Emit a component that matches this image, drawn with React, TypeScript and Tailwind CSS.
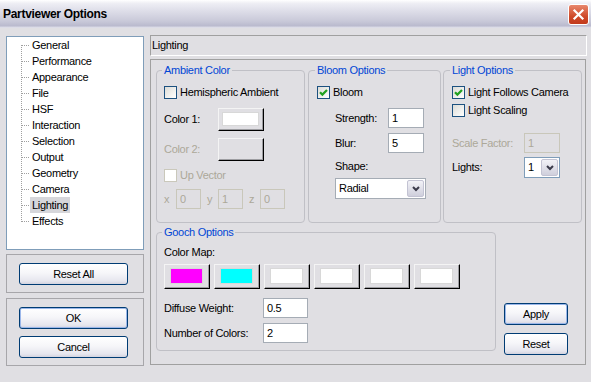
import React from "react";

const GRAY = "text-[#aca899]";

function Checkbox({ checked = false, disabled = false }: { checked?: boolean; disabled?: boolean }) {
  if (disabled) {
    return <span className="block w-[13px] h-[13px] shrink-0 border border-[#cac8bb] bg-white" />;
  }
  return (
    <span className="flex w-[13px] h-[13px] shrink-0 items-center justify-center border border-[#1c5180] bg-[linear-gradient(135deg,#dcdcd7,#ffffff)]">
      {checked && (
        <svg width="11" height="11" viewBox="0 0 11 11">
          <path d="M2 5.2 L4.4 7.6 L9 3" stroke="#21a121" strokeWidth="2.2" fill="none" />
        </svg>
      )}
    </span>
  );
}

function TextBox({ value, w, disabled = false, h = "h-[20px]" }: { value: string; w: string; disabled?: boolean; h?: string }) {
  return (
    <div
      className={`${w} ${h} flex items-center pl-[3px] border ${
        disabled ? "border-[#c9c7ba] text-[#aca899]" : "border-[#a5acb5] bg-white"
      }`}
    >
      {value}
    </div>
  );
}

function Chevron() {
  return (
    <svg width="8" height="6" viewBox="0 0 8 6">
      <polyline points="1,1 4,4 7,1" stroke="#3a3a4a" strokeWidth="2" fill="none" />
    </svg>
  );
}

function Select({ value, w, border }: { value: string; w: string; border: string }) {
  return (
    <div className={`${w} h-[21px] flex items-stretch border ${border} bg-white p-[1px]`}>
      <div className="flex-1 flex items-center pl-[2px]">{value}</div>
      <div className="w-[17px] flex items-center justify-center rounded-[2px] border border-[#c3c3d3] bg-[linear-gradient(to_bottom,#f2f2f7,#cfcfdc)]">
        <Chevron />
      </div>
    </div>
  );
}

function ColorButton({ swatch, w = "w-[46px]", h = "h-[25px]", pad = "p-[3px]" }: { swatch?: string; w?: string; h?: string; pad?: string }) {
  return (
    <div className={`${w} ${h} shrink-0 border-t border-l border-t-[#f4f4f4] border-l-[#f4f4f4] border-r border-b border-r-[#000000] border-b-[#000000]`}>
      <div className={`w-full h-full border-r border-b border-r-[#9d9da1] border-b-[#9d9da1] bg-[#e0dfe3] ${pad}`}>
        {swatch && <div className={`w-full h-full border border-[#d8d8d8] ${swatch}`} />}
      </div>
    </div>
  );
}

function XpButton({ label, w, def = false }: { label: string; w: string; def?: boolean }) {
  return (
    <div
      className={`${w} h-[22px] flex items-center justify-center rounded-[3px] border border-[#003c74] bg-[linear-gradient(to_bottom,#ffffff_0%,#f6f6f9_45%,#e6e6ee_85%,#d3d3df_100%)] ${
        def ? "shadow-[inset_0_0_0_1px_#9bb7ea]" : ""
      }`}
    >
      {label}
    </div>
  );
}

const treeItems = [
  "General",
  "Performance",
  "Appearance",
  "File",
  "HSF",
  "Interaction",
  "Selection",
  "Output",
  "Geometry",
  "Camera",
  "Lighting",
  "Effects",
];

function Tree() {
  return (
    <div className="h-[214px] border border-[#7f9db9] bg-white">
      {treeItems.map((it, i) => (
        <div key={it} className="h-[16px] flex items-center pl-[13px]">
          <svg width="10" height="16" viewBox="0 0 10 16" shapeRendering="crispEdges" className="shrink-0">
            <line
              x1="1.5"
              y1={i === 0 ? 8 : 0}
              x2="1.5"
              y2={i === treeItems.length - 1 ? 9 : 16}
              stroke="#a0a0a0"
              strokeDasharray="1 1"
            />
            <line x1="2" y1="8.5" x2="10" y2="8.5" stroke="#a0a0a0" strokeDasharray="1 1" />
          </svg>
          <span className={`h-[16px] flex items-center px-[2px] ${it === "Lighting" ? "bg-[#d6d6da]" : ""}`}>{it}</span>
        </div>
      ))}
    </div>
  );
}

function Legend({ children }: { children: React.ReactNode }) {
  return <legend className="ml-[-2px] px-[2px] text-[#0046d5] leading-[13px]">{children}</legend>;
}

export default function App() {
  return (
    <div className="w-[591px] h-[382px] overflow-hidden bg-[#e0dfe3] font-['Liberation_Sans',Arial,sans-serif] text-[11px] leading-[13px] tracking-[-0.3px] text-black flex flex-col">
      {/* Title bar */}
      <div className="h-[28px] shrink-0 flex items-center justify-between pl-[3px] pr-[2px] bg-[linear-gradient(to_bottom,#ffffff_0%,#eeeef4_12%,#dddde8_40%,#c9c9d9_75%,#babace_92%,#e6e6ee_100%)]">
        <span className="font-bold text-[12px] tracking-[-0.3px]">Partviewer Options</span>
        <div className="w-[21px] h-[21px] flex items-center justify-center rounded-[3px] border border-white bg-[linear-gradient(to_bottom,#e8876c,#cf4a2a_60%,#c23a1c)]">
          <svg width="13" height="13" viewBox="0 0 13 13">
            <path d="M2.5 2.5 L10.5 10.5 M10.5 2.5 L2.5 10.5" stroke="#ffffff" strokeWidth="2.2" strokeLinecap="square" />
          </svg>
        </div>
      </div>

      <div className="flex">
        {/* Left column */}
        <div className="ml-[6px] mt-[8px] w-[138px] flex flex-col">
          <Tree />
          <div className="mt-[4px] h-[39px] border border-[#a7a6aa] pl-[12px] pt-[8px]">
            <XpButton label="Reset All" w="w-[109px]" />
          </div>
          <div className="mt-[5px] h-[68px] border border-[#a7a6aa] pl-[12px] pt-[8px] flex flex-col gap-[7px]">
            <XpButton label="OK" w="w-[109px]" def />
            <XpButton label="Cancel" w="w-[109px]" />
          </div>
        </div>

        {/* Right column */}
        <div className="ml-[6px] mt-[7px] w-[437px] flex flex-col">
          <div className="h-[21px] flex items-center pl-[1px] border-t border-l border-t-[#a0a0a0] border-l-[#a0a0a0] border-b border-r border-b-white border-r-white">
            Lighting
          </div>
          <div className="mt-[3px] w-[436px] h-[306px] border border-[#a0a0a0] pl-[5px] pt-[4px]">
            <div className="flex">
              {/* Ambient */}
              <fieldset className="w-[149px] h-[159px] border border-[#c0c0c6] rounded-[4px] pl-[7px]">
                <Legend>Ambient Color</Legend>
                <div className="mt-[9px] h-[13px] flex items-center">
                  <Checkbox />
                  <span className="ml-[3px]">Hemispheric Ambient</span>
                </div>
                <div className="mt-[9px] h-[23px] flex items-center">
                  <span className="w-[54px]">Color 1:</span>
                  <ColorButton swatch="bg-white" h="h-[23px]" />
                </div>
                <div className="mt-[7px] h-[23px] flex items-center">
                  <span className={`w-[54px] ${GRAY}`}>Color 2:</span>
                  <ColorButton h="h-[23px]" />
                </div>
                <div className="mt-[8px] h-[13px] flex items-center">
                  <Checkbox disabled />
                  <span className={`ml-[3px] ${GRAY}`}>Up Vector</span>
                </div>
                <div className={`mt-[7px] h-[20px] flex items-center ${GRAY}`}>
                  <span className="w-[12px]">x</span>
                  <TextBox value="0" w="w-[25px]" disabled />
                  <span className="ml-[6px] w-[11px]">y</span>
                  <TextBox value="1" w="w-[25px]" disabled />
                  <span className="ml-[6px] w-[11px]">z</span>
                  <TextBox value="0" w="w-[25px]" disabled />
                </div>
              </fieldset>

              {/* Bloom */}
              <fieldset className="ml-[3px] w-[133px] h-[159px] border border-[#c0c0c6] rounded-[4px] pl-[8px]">
                <Legend>Bloom Options</Legend>
                <div className="mt-[9px] h-[13px] flex items-center">
                  <Checkbox checked />
                  <span className="ml-[3px]">Bloom</span>
                </div>
                <div className="mt-[9px] h-[20px] flex items-center pl-[18px]">
                  <span className="w-[53px]">Strength:</span>
                  <TextBox value="1" w="w-[36px]" />
                </div>
                <div className="mt-[5px] h-[20px] flex items-center pl-[18px]">
                  <span className="w-[53px]">Blur:</span>
                  <TextBox value="5" w="w-[36px]" />
                </div>
                <div className="mt-[7px] h-[13px] flex items-center pl-[18px]">Shape:</div>
                <div className="mt-[5px] pl-[18px]">
                  <Select value="Radial" w="w-[91px]" border="border-[#a5acb5]" />
                </div>
              </fieldset>

              {/* Light */}
              <fieldset className="ml-[2px] w-[139px] h-[159px] border border-[#c0c0c6] rounded-[4px] pl-[8px]">
                <Legend>Light Options</Legend>
                <div className="mt-[9px] h-[13px] flex items-center">
                  <Checkbox checked />
                  <span className="ml-[3px]">Light Follows Camera</span>
                </div>
                <div className="mt-[5px] h-[13px] flex items-center">
                  <Checkbox />
                  <span className="ml-[3px]">Light Scaling</span>
                </div>
                <div className="mt-[16px] h-[20px] flex items-center">
                  <span className={`w-[72px] ${GRAY}`}>Scale Factor:</span>
                  <TextBox value="1" w="w-[36px]" disabled />
                </div>
                <div className="mt-[4px] h-[21px] flex items-center">
                  <span className="w-[72px]">Lights:</span>
                  <Select value="1" w="w-[36px]" border="border-[#7f9db9]" />
                </div>
              </fieldset>
            </div>

            <div className="mt-[3px] flex">
              {/* Gooch */}
              <fieldset className="w-[340px] h-[125px] border border-[#c0c0c6] rounded-[4px] pl-[7px]">
                <Legend>Gooch Options</Legend>
                <div className="mt-[7px] h-[13px] flex items-center">Color Map:</div>
                <div className="mt-[5px] flex gap-[4px]">
                  <ColorButton swatch="bg-[#ff00ff]" pad="px-[5px] py-[3px]" />
                  <ColorButton swatch="bg-[#00ffff]" pad="px-[5px] py-[3px]" />
                  <ColorButton swatch="bg-white" pad="px-[5px] py-[3px]" />
                  <ColorButton swatch="bg-white" pad="px-[5px] py-[3px]" />
                  <ColorButton swatch="bg-white" pad="px-[5px] py-[3px]" />
                  <ColorButton swatch="bg-white" pad="px-[5px] py-[3px]" />
                </div>
                <div className="mt-[9px] h-[20px] flex items-center">
                  <span className="w-[99px]">Diffuse Weight:</span>
                  <TextBox value="0.5" w="w-[45px]" />
                </div>
                <div className="mt-[5px] h-[20px] flex items-center">
                  <span className="w-[99px]">Number of Colors:</span>
                  <TextBox value="2" w="w-[45px]" />
                </div>
              </fieldset>

              <div className="ml-[8px] pt-[77px] flex flex-col gap-[8px]">
                <XpButton label="Apply" w="w-[64px]" def />
                <XpButton label="Reset" w="w-[64px]" />
              </div>
            </div>
          </div>
        </div>
      </div>
    </div>
  );
}
